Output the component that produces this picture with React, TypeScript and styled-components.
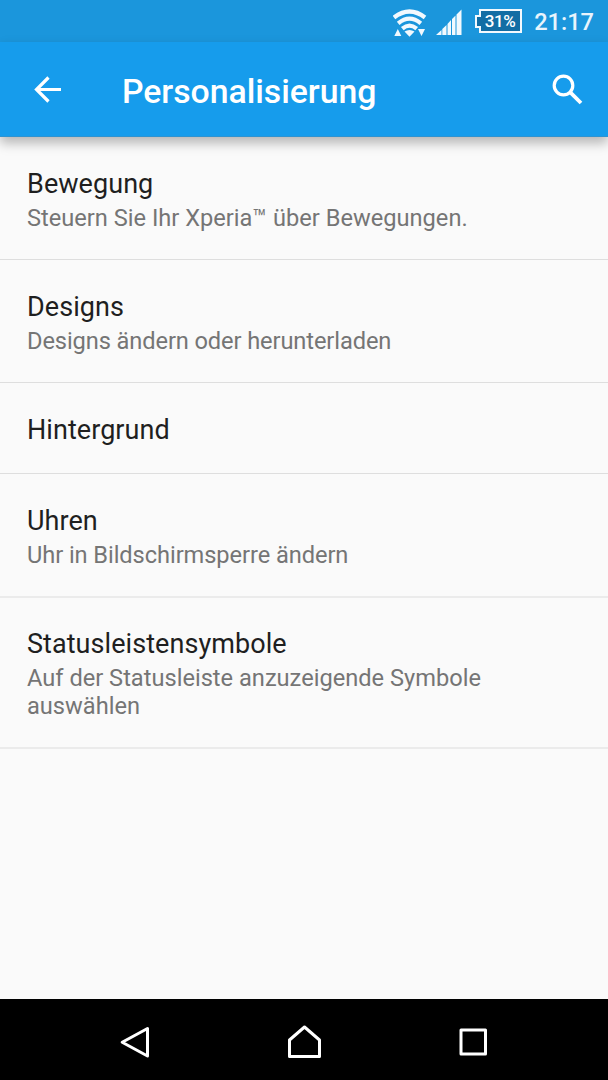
import React from 'react';
import styled, { createGlobalStyle } from 'styled-components';

const GlobalStyle = createGlobalStyle`
  * { box-sizing: border-box; }
  body { margin: 0; font-family: Roboto, sans-serif; background: #fafafa; }
`;

const Screen = styled.div`
  display: flex;
  flex-direction: column;
  width: 608px;
  height: 1080px;
  overflow: hidden;
  background: #fafafa;
`;

const StatusBar = styled.div`
  display: flex;
  flex: none;
  height: 42px;
  padding-right: 14px;
  justify-content: flex-end;
  align-items: flex-start;
  background: #1b96dc;
`;

const StatusIcons = styled.svg`
  display: block;
  width: 82px;
  height: 42px;
`;

const Battery = styled.div`
  display: flex;
  position: relative;
  width: 47px;
  height: 24px;
`;

const BatteryShape = styled.svg`
  position: absolute;
  inset: 0;
`;

const BatteryLevel = styled.span`
  position: relative;
  width: 47px;
  padding-left: 3px;
  line-height: 24px;
  font-size: 17px;
  font-weight: 500;
  letter-spacing: -0.3px;
  text-align: center;
  color: #fff;
`;

const BatterySlot = styled.div`
  padding: 9px 0 0;
  margin-right: 12px;
`;

const Clock = styled.span`
  line-height: 28px;
  padding-top: 8px;
  font-size: 23.6px;
  font-weight: 500;
  color: #e8f4fc;
`;

const AppBar = styled.header`
  display: flex;
  flex: none;
  position: relative;
  align-items: center;
  height: 95px;
  padding: 0 25px 0 32px;
  background: #169cec;
  border-bottom: 1px solid #2f93d0;
  box-shadow: 0 6px 11px rgba(0, 0, 0, 0.28);
`;

const BarIcon = styled.svg`
  flex: none;
  display: block;
  width: 32px;
  height: 32px;
`;

const Heading = styled.h1`
  flex: 1;
  margin: 5px 0 0 58px;
  font-size: 33.8px;
  line-height: 40px;
  font-weight: 500;
  letter-spacing: -0.05px;
  color: #fff;
`;

const List = styled.main`
  flex: 1;
`;

const Row = styled.section<{ $top?: number; $soft?: boolean }>`
  padding: ${({ $top = 31 }) => $top}px 27px 27px;
  border-bottom: ${({ $soft }) => ($soft ? '2px solid #ebebeb' : '1px solid #dedede')};
`;

const Title = styled.h2`
  margin: 0;
  font-size: 27px;
  line-height: 32px;
  font-weight: 400;
  letter-spacing: 0.06px;
  color: #1f1f1f;
`;

const Summary = styled.p<{ $tracking?: number }>`
  margin: 4px 0 0;
  max-width: 500px;
  font-size: 23.64px;
  line-height: 28px;
  letter-spacing: ${({ $tracking = 0 }) => $tracking}px;
  color: #757575;
`;

const NavBar = styled.nav`
  display: flex;
  flex: none;
  height: 81px;
  padding: 0 51px;
  background: #000;
`;

const NavButton = styled.div`
  display: flex;
  flex: 1;
  justify-content: center;
  padding-top: 24px;
`;

const NavIcon = styled.svg`
  display: block;
  width: 40px;
  height: 40px;
  fill: none;
  stroke: #fff;
  stroke-width: 3;
  stroke-linejoin: round;
`;

const items = [
  { title: 'Bewegung', summary: 'Steuern Sie Ihr Xperia™ über Bewegungen.' },
  { title: 'Designs', summary: 'Designs ändern oder herunterladen', tracking: -0.1 },
  { title: 'Hintergrund' },
  { title: 'Uhren', summary: 'Uhr in Bildschirmsperre ändern', tracking: -0.07, soft: true },
  {
    title: 'Statusleistensymbole',
    summary: 'Auf der Statusleiste anzuzeigende Symbole auswählen',
    top: 30,
    soft: true,
  },
];

export default function App() {
  return (
    <Screen>
      <GlobalStyle />
      <StatusBar>
        <StatusIcons viewBox="393 0 82 42">
          <g fill="none" stroke="#f2f9fe" strokeWidth="4.2">
            <path d="M394 17.500Q409.500 5.500 425 17.500" />
            <path d="M398.200 23.300Q409.500 14 420.800 23.300" />
            <path d="M402.300 28.600Q409.500 22.600 416.700 28.600" />
          </g>
          <path d="M404.500 31.500Q409.500 28.500 414.500 31.500L409.500 36.800ZM394.300 36L397.800 29L401.300 36ZM418 29H425L421.500 36Z" fill="#f2f9fe" />
          <path d="M436 35L441.500 30V35ZM442.300 35V29L446.500 25V35ZM447.500 35V24L451 20V35ZM452 35V19L455.500 15.500V35ZM456.500 35V14.500L461.500 9.500V35Z" fill="#f2f9fe" />
        </StatusIcons>
        <BatterySlot>
          <Battery>
            <BatteryShape width="47" height="24" viewBox="0 0 47 24">
              <path d="M5 1H46V23H5V18H1V7H5Z" fill="#126da4" stroke="#f2f9fe" strokeWidth="2" />
            </BatteryShape>
            <BatteryLevel>31%</BatteryLevel>
          </Battery>
        </BatterySlot>
        <Clock>21:17</Clock>
      </StatusBar>
      <AppBar>
        <BarIcon viewBox="0 0 32 32" fill="none" stroke="#fff" strokeWidth="3.2">
          <path d="M29 16.500H5M16.500 4.500L4.500 16.500L16.500 28.500" />
        </BarIcon>
        <Heading>Personalisierung</Heading>
        <BarIcon viewBox="0 0 32 32" fill="none" stroke="#fff">
          <circle cx="12.500" cy="12.500" r="9.300" strokeWidth="3.200" />
          <path d="M19.300 19.300L30 30" strokeWidth="3.800" />
        </BarIcon>
      </AppBar>
      <List>
        {items.map(({ title, summary, tracking, top, soft }) => (
          <Row key={title} $top={top} $soft={soft}>
            <Title>{title}</Title>
            {summary && <Summary $tracking={tracking}>{summary}</Summary>}
          </Row>
        ))}
      </List>
      <NavBar>
        <NavButton>
          <NavIcon viewBox="0 0 40 40">
            <path d="M32.500 5.500V33L7.200 19.300Z" />
          </NavIcon>
        </NavButton>
        <NavButton>
          <NavIcon viewBox="0 0 40 40">
            <path d="M5.500 33.500V17L20.500 4L35.500 17V33.500Z" />
          </NavIcon>
        </NavButton>
        <NavButton>
          <NavIcon viewBox="0 0 40 40">
            <path d="M8 7H32.500V31H8Z" />
          </NavIcon>
        </NavButton>
      </NavBar>
    </Screen>
  );
}
